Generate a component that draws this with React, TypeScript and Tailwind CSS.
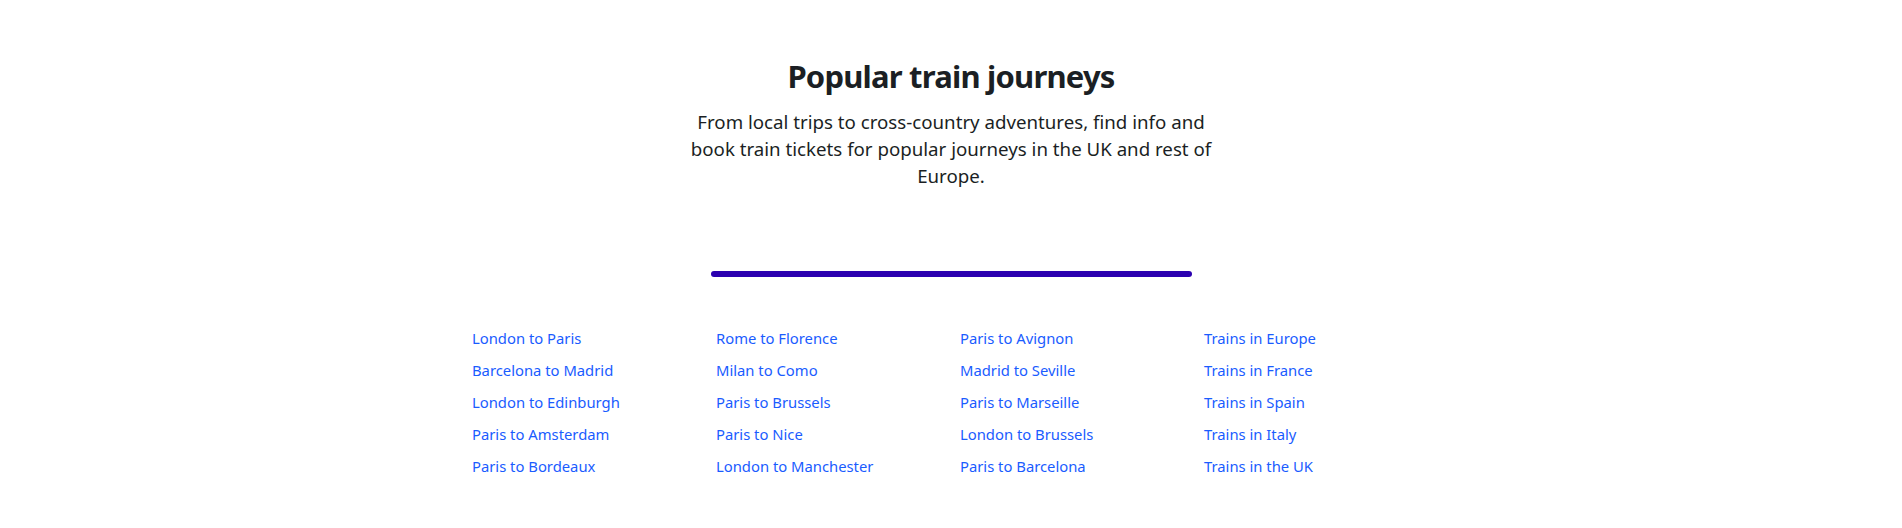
const columns: string[][] = [
  ["London to Paris", "Barcelona to Madrid", "London to Edinburgh", "Paris to Amsterdam", "Paris to Bordeaux"],
  ["Rome to Florence", "Milan to Como", "Paris to Brussels", "Paris to Nice", "London to Manchester"],
  ["Paris to Avignon", "Madrid to Seville", "Paris to Marseille", "London to Brussels", "Paris to Barcelona"],
  ["Trains in Europe", "Trains in France", "Trains in Spain", "Trains in Italy", "Trains in the UK"],
];

export default function App() {
  return (
    <section className="min-h-[528px] w-full bg-white font-['Noto_Sans',sans-serif] text-[#1b1f24]">
      {/* Heading */}
      <div className="flex flex-col items-center pt-[56px] text-center">
        <h2 className="text-[31px] font-bold leading-[40px] tracking-[-0.8px]">Popular train journeys</h2>
        <p className="mt-[12px] max-w-[540px] text-[18.7px] leading-[27px]">
          From local trips to cross-country adventures, find info and book train tickets for popular journeys in the UK
          and rest of Europe.
        </p>
      </div>

      {/* Divider bar */}
      <div className="mt-[82px] flex justify-center">
        <div className="h-[6px] w-[481px] rounded-full bg-[#2b00b0]" />
      </div>

      {/* Link columns */}
      <div className="mx-auto mt-[51px] w-[994px] pl-[18px]">
        <div className="grid grid-cols-[repeat(4,244px)]">
          {columns.map((col, i) => (
            <ul key={i} className="flex flex-col gap-[12px]">
              {col.map((label) => (
                <li key={label} className="text-[14.8px] leading-[20px]">
                  <a href="#" className="text-[#1a5cff] hover:underline">
                    {label}
                  </a>
                </li>
              ))}
            </ul>
          ))}
        </div>
      </div>
    </section>
  );
}
